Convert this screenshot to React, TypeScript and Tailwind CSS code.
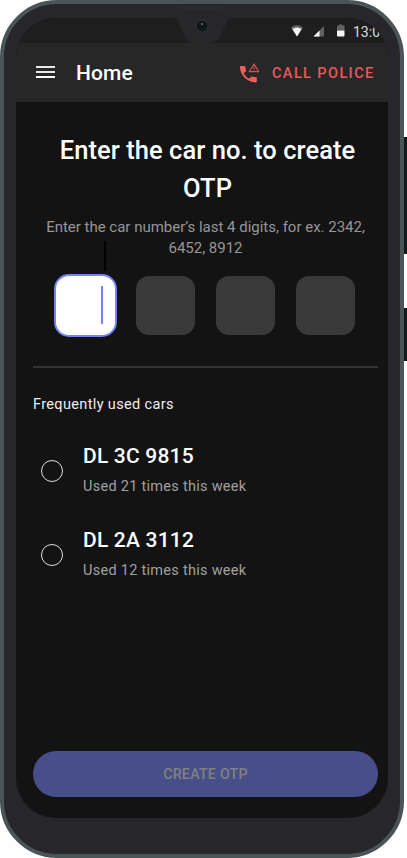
import React from "react";

const cars = [
  { plate: "DL 3C 9815", usage: "Used 21 times this week" },
  { plate: "DL 2A 3112", usage: "Used 12 times this week" },
];

function StatusBar() {
  return (
    <div className="flex h-[25px] shrink-0 items-center bg-[#1e1e1e] pl-[275px]">
      <svg className="h-[25px] w-[60px] shrink-0" viewBox="0 0 60 25">
        <path d="M0 9.5Q6 5 12 9.5L6 18.5Z" fill="#666" />
        <path d="M1.300 11Q6 8 10.700 11L6 18.500Z" fill="#f5f5f5" />
        <path d="M22.500 18.500L33 8V18.500Z" fill="#626262" />
        <path d="M22.500 18.500L28.500 12.500V18.500Z" fill="#f5f5f5" />
        <path d="M46 8.500Q46 7.500 47 7.500H48V6.500H51.500V7.500H52.500Q53.500 7.500 53.500 8.500V12.500H46Z" fill="#626262" />
        <path d="M46 12.500H53.500V17.500Q53.500 18.500 52.500 18.500H47Q46 18.500 46 17.500Z" fill="#f5f5f5" />
      </svg>
      <span className="ml-[2px] mt-[2px] whitespace-nowrap text-[14px] leading-none text-[#dcdcdc]">13:00</span>
    </div>
  );
}

function Header() {
  return (
    <header className="flex h-[59px] shrink-0 items-center bg-[#272727] pl-5">
      <div className="mb-px flex w-[19px] flex-col gap-[3px]">
        <div className="h-[2px] bg-[#e8e8e8]" />
        <div className="h-[2px] bg-[#e8e8e8]" />
        <div className="h-[2px] bg-white" />
      </div>
      <h1 className="ml-[21px] mt-[2px] w-[162px] text-[21px] font-medium leading-none tracking-[0.1px] text-white">Home</h1>
      <svg className="h-6 w-6 shrink-0" viewBox="0 0 24 24">
        <path
          d="M3 5H6.400Q7.400 5 7.400 6Q7.400 7.500 8 9.300Q8.200 9.900 7.700 10.400L5.600 12.500Q8 16 11 17.800L13.200 15.800Q13.700 15.300 14.300 15.500Q16 16 18 16.100Q18.800 16.200 18.800 17V20.500Q18.800 21.600 17.700 21.500C9 21.200 2 14 1.900 6Q1.900 5 3 5Z"
          fill="#f25c5c"
        />
        <path d="M16 3L20.800 10.700H11.200Z" fill="none" stroke="#d95050" strokeWidth="1.200" strokeLinejoin="round" />
        <path d="M16 5.700V8M16 8.800V9.700" stroke="#eb5757" strokeWidth="1" />
      </svg>
      <span className="ml-[10px] mt-[3px] whitespace-nowrap text-[14.5px] font-medium leading-none tracking-[1.4px] text-[#eb5757]">CALL POLICE</span>
    </header>
  );
}

function CodeInput() {
  return (
    <div className="mt-[15px] flex h-[63px] items-center pl-[38px]">
      <div className="flex h-[63px] w-[63px] items-center justify-end rounded-[15px] border-2 border-[#7583f5] bg-white pb-px pr-[12px]">
        <div className="h-[38px] w-[2px] bg-[#7583f5]" />
      </div>
      <div className="ml-[19px] flex gap-[21px]">
        <div className="h-[59px] w-[59px] rounded-[13px] bg-[#393939]" />
        <div className="h-[59px] w-[59px] rounded-[13px] bg-[#393939]" />
        <div className="h-[59px] w-[59px] rounded-[13px] bg-[#393939]" />
      </div>
    </div>
  );
}

export default function App() {
  return (
    <div className="relative h-[858px] w-[407px] overflow-hidden bg-white font-['Roboto','Liberation_Sans',sans-serif]">
      <div className="absolute right-0 top-[137px] h-[117px] w-[3px] bg-[#11191b]" />
      <div className="absolute right-0 top-[308px] h-[53px] w-[3px] bg-[#11191b]" />
      <div className="h-[858px] w-[404px] rounded-[57px] border-4 border-[#4a5457] bg-[#27262b] px-3 pt-[14px]">
        <main className="flex h-[800px] w-[372px] flex-col overflow-hidden rounded-[40px] bg-[#131313]">
          <StatusBar />
          <Header />
          <section className="relative">
            <h2 className="mt-[29px] whitespace-nowrap pl-[11px] text-center text-[25.5px] font-medium leading-[38px] tracking-[0.06px] text-white">
              Enter the car no. to create
              <br />
              OTP
            </h2>
            <p className="mt-[10px] whitespace-nowrap pl-[7px] text-center text-[15px] leading-[21px] tracking-[-0.01px] text-[#969696]">
              Enter the car number’s last 4 digits, for ex. 2342,
              <br />
              6452, 8912
            </p>
            <CodeInput />
            <div className="absolute left-[88px] top-[139px] h-[30px] w-[2px] bg-black" />
          </section>
          <div className="ml-[17px] mt-[29px] h-[2px] w-[345px] bg-[#333]" />
          <section className="pl-[17px]">
            <h3 className="mt-[27px] text-[14.5px] leading-[20px] tracking-[0.35px] text-[#ededed]">Frequently used cars</h3>
            <ul className="mt-[26px]">
              {cars.map((car) => (
                <li key={car.plate} className="flex h-[84px] items-start">
                  <div className="ml-2 mt-[19px] h-[22px] w-[22px] shrink-0 rounded-full border border-[#dedede]" />
                  <div className="ml-5">
                    <div className="text-[21px] font-medium leading-[30px] tracking-[0.2px] text-white">{car.plate}</div>
                    <div className="mt-[6px] text-[14.5px] leading-[20px] tracking-[0.28px] text-[#a0a0a0]">{car.usage}</div>
                  </div>
                </li>
              ))}
            </ul>
          </section>
          <button className="mb-[21px] ml-[17px] mt-auto h-[46px] w-[345px] shrink-0 rounded-full bg-[#484e89] pt-[2px] text-[14.3px] font-medium tracking-[0.2px] text-[#818181]">
            CREATE OTP
          </button>
        </main>
      </div>
      <svg className="absolute left-[170px] top-[4px] h-10 w-16" viewBox="170 4 64 40">
        <path d="M170 17H234V18H232Q228 18 226 23L222 33Q218 43.500 206 43.500H198Q187 43.500 183 33L179 23Q177 18 173 18H170Z" fill="#27262b" />
        <path d="M178.500 6H226Q224 10 221 10H184Q181 10 178.500 6Z" fill="#252b2e" />
        <circle cx="202" cy="26" r="8" fill="#252b2e" />
        <circle cx="202" cy="26" r="5.200" fill="#101516" />
        <circle cx="202" cy="24" r="1.100" fill="#646b6e" />
      </svg>
    </div>
  );
}
